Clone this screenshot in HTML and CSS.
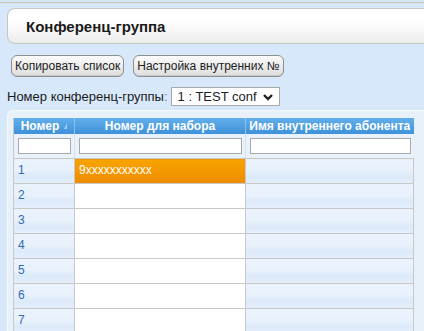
FILE: index.html
```html
<!DOCTYPE html>
<html lang="ru">
<head>
    <meta charset="UTF-8">
    <title>Конференц-группа</title>
    <link rel="stylesheet" href="styles.css">
</head>
<body>
    <div class="topline"></div>

    <!-- Заголовок страницы -->
    <div class="title">Конференц-группа</div>

    <div class="toolbar">
        <button class="btn">Копировать список</button>
        <button class="btn">Настройка внутренних №</button>
    </div>

    <div class="group-row">
        <label for="group">Номер конференц-группы<span class="colon">:</span></label>
        <div class="select">
            <span>1 : TEST conf</span>
            <svg width="12" height="8" viewBox="0 0 12 8"><polyline points="2,2 6,6 10,2" fill="none" stroke="#222" stroke-width="2.4"/></svg>
        </div>
    </div>

    <!-- Таблица участников -->
    <div class="panel">
        <table class="grid">
            <colgroup>
                <col class="c-num">
                <col class="c-dial">
                <col class="c-name">
            </colgroup>
            <thead>
                <tr class="head">
                    <th>Номер<span class="sort"></span></th>
                    <th>Номер для набора</th>
                    <th>Имя внутреннего абонента</th>
                </tr>
                <tr class="filter">
                    <td><input type="text"></td>
                    <td><input type="text"></td>
                    <td><input type="text"></td>
                </tr>
            </thead>
            <tbody>
                <tr><td class="num">1</td><td class="dial selected">9xxxxxxxxxxx</td><td class="name"></td></tr>
                <tr><td class="num">2</td><td class="dial"></td><td class="name"></td></tr>
                <tr><td class="num">3</td><td class="dial"></td><td class="name"></td></tr>
                <tr><td class="num">4</td><td class="dial"></td><td class="name"></td></tr>
                <tr><td class="num">5</td><td class="dial"></td><td class="name"></td></tr>
                <tr><td class="num">6</td><td class="dial"></td><td class="name"></td></tr>
                <tr><td class="num">7</td><td class="dial"></td><td class="name"></td></tr>
            </tbody>
        </table>
    </div>
</body>
</html>
```

FILE: styles.css
```css
body {
    margin: 0;
    background-color: #d7e8fa;
    font-family: "Liberation Sans", Arial, sans-serif;
    font-size: 12px;
    color: #222;
    overflow: hidden;
}
.topline {
    height: 2px;
    border-bottom: 1px solid #cbc3ac;
}
.title {
    margin: 5px 0 0 7px;
    height: 34px;
    line-height: 35px;
    padding-left: 18px;
    border: 1px solid #c6c6c6;
    border-right: none;
    border-radius: 8px 0 0 8px;
    background: linear-gradient(#ffffff 35%, #ececec);
    font-size: 15px;
    font-weight: bold;
    color: #1a1a1a;
}
.toolbar {
    display: flex;
    gap: 9px;
    margin: 11px 0 0 11px;
}
.btn {
    height: 22px;
    padding: 0 3px;
    border: 1px solid #8f8f8f;
    border-radius: 6px;
    background: linear-gradient(#fbfbfb, #dedede);
    font-family: inherit;
    font-size: 12px;
    color: #222;
    box-shadow: inset 0 -1px 0 #c8c8c8;
}
.group-row {
    display: flex;
    align-items: center;
    margin: 10px 0 0 7px;
}
.group-row label {
    font-size: 13px;
    color: #1a1a1a;
}
.colon {
    color: #5a7da5;
}
.select {
    display: flex;
    align-items: center;
    justify-content: space-between;
    width: 96px;
    height: 17px;
    margin-left: 3px;
    padding: 0 5px 0 6px;
    border: 1px solid #aaa;
    background: #fff;
    font-size: 13px;
}
.panel {
    margin: 4px 0 0 7px;
    padding: 7px 0 0 5px;
    height: 220px;
    border: 1px solid #f4f8fd;
    border-right: none;
    border-radius: 6px 0 0 0;
    background: #e8f0f9;
}
.grid {
    border-collapse: collapse;
    table-layout: fixed;
    width: 400px;
}
.c-num { width: 61px; }
.c-dial { width: 171px; }
.c-name { width: 168px; }
.head th {
    height: 16px;
    padding: 0;
    background: linear-gradient(#62aeea, #3f91d9);
    color: #fff;
    font-size: 12px;
    font-weight: bold;
    border-left: 1px solid #8cc3ee;
    white-space: nowrap;
}
.head th:first-child {
    border-left: 1px solid #c8c8c8;
}
.sort {
    display: inline-block;
    margin-left: 5px;
    width: 0;
    height: 0;
    border-left: 3px solid transparent;
    border-bottom: 6px solid #9fcdf1;
    vertical-align: 1px;
}
.filter td {
    height: 24px;
    padding: 0 3px 0 4px;
    background: #e9f1fa;
    border-bottom: 1px solid #c8c8c8;
    border-left: 1px solid #d8e2ee;
}
.filter td:first-child {
    border-left: 1px solid #c8c8c8;
}
.filter input {
    display: block;
    box-sizing: border-box;
    width: 100%;
    height: 16px;
    margin: 0;
    border: 1px solid #a9a9a9;
    background: #fff;
}
tbody td {
    box-sizing: border-box;
    height: 25px;
    padding: 4px 0 0 4px;
    vertical-align: top;
    border: 1px solid #c8c8c8;
    border-top: none;
    font-size: 12px;
}
.num,
.name {
    color: #2d6cb3;
    background: linear-gradient(#ebf4fd 0%, #e8f1fc 45%, #dbe9f9 70%, #e6effb 100%);
}
.dial {
    background: #fff;
}
.dial.selected {
    background: linear-gradient(#f8a400, #ee8b00);
    color: #fff;
}
```
